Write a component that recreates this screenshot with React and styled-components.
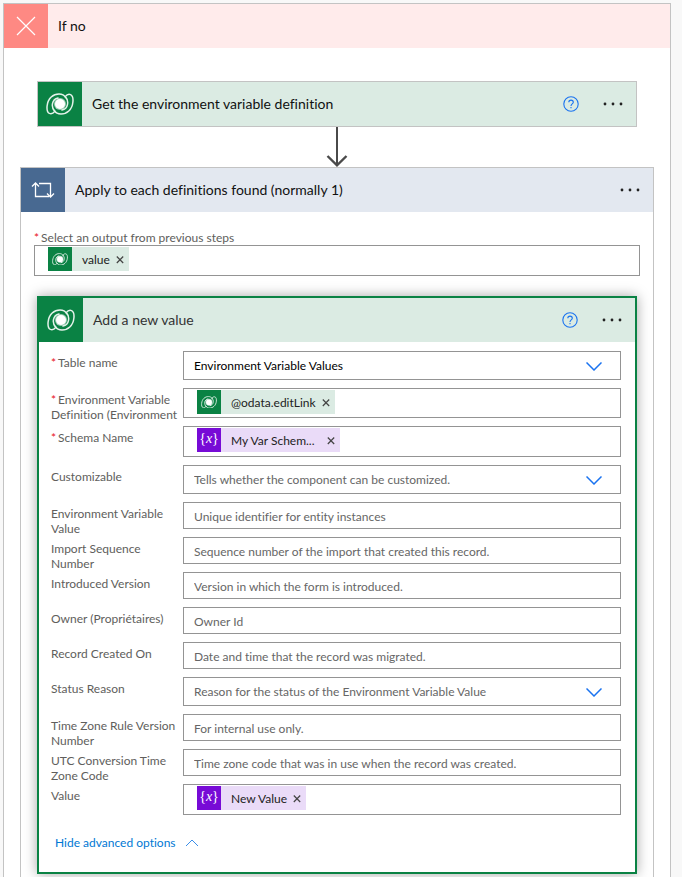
import React from 'react';
import styled, { createGlobalStyle } from 'styled-components';

const GlobalStyle = createGlobalStyle`
  * {
    box-sizing: border-box;
  }

  body {
    margin: 0;
    background: #f8f8f8;
    font-family: Lato, "Open Sans", sans-serif;
    font-size: 12px;
    font-variant-ligatures: none;
    color: #000;
  }

  button, input, select {
    font: inherit;
    color: inherit;
  }
`;

const Page = styled.main`
  padding: 3px 11px 0 3px;
`;

const Branch = styled.section`
  border: 1px solid #c3c3c3;
  border-bottom: 0;
  background: #fff;
`;

const BranchBody = styled.div`
  padding: 33px 16px 0;
`;

const Header = styled.header`
  display: flex;
  align-items: center;
  height: 44px;
  padding-right: 13px;
  background: ${(props) => props.$tint};
`;

const HeaderIcon = styled.div`
  display: flex;
  align-items: center;
  justify-content: center;
  width: 44px;
  height: 44px;
  background: ${(props) => props.$color};
`;

const Title = styled.h2`
  flex: 1;
  margin: 0 0 0 10px;
  padding-bottom: 1px;
  font-size: 14px;
  font-weight: 400;
  color: ${(props) => props.$color || '#111'};
`;

const IconButton = styled.button`
  display: flex;
  align-items: center;
  padding: 0;
  border: 0;
  background: none;
  cursor: pointer;
`;

const HeaderActions = styled.div`
  display: flex;
  align-items: center;
  gap: 24px;
`;

const ActionCard = styled.article`
  margin: 0 17px;
  border: 1px solid #c3c3c3;
`;

const Connector = styled.div`
  display: flex;
  justify-content: center;
  height: 40px;
`;

const Scope = styled.section`
  padding-bottom: 3px;
  border: 1px solid #c3c3c3;
  border-bottom: 0;
`;

const ScopeInput = styled.div`
  padding: 18px 13px 20px;
`;

const SelectedCard = styled.article`
  margin: 0 16px;
  border: 2px solid #0a8244;
  background: #fff;
  box-shadow: 0 0 12px rgba(0, 0, 0, 0.35);
`;

const Form = styled.form`
  padding: 9px 14px 20px 12px;
`;

const Row = styled.div`
  display: grid;
  grid-template-columns: 132px 1fr;
  align-items: start;
`;

const Label = styled.label`
  display: block;
  line-height: 15px;
  color: #605e5c;
`;

const RowLabel = styled(Label)`
  padding-top: 4px;
`;

const Required = styled.span`
  margin-right: 2px;
  color: #e81123;
`;

const Field = styled.div`
  position: relative;
  margin-bottom: 8px;
`;

const TextInput = styled.input`
  display: block;
  width: 100%;
  height: 27px;
  padding: 2px 10px 0;
  border: 1px solid #949494;
  border-radius: 0;
  background: #fff;

  &::placeholder {
    color: #666;
    opacity: 1;
  }
`;

const Select = styled.select`
  display: block;
  width: 100%;
  height: 29px;
  padding: 0 44px 0 10px;
  border: 1px solid #949494;
  border-radius: 0;
  background: #fff;
  color: ${(props) => (props.$filled ? '#000' : '#666')};
  appearance: none;
`;

const SelectArrow = styled.svg`
  position: absolute;
  top: 11px;
  right: 19px;
  pointer-events: none;
`;

const TokenBox = styled.div`
  display: flex;
  height: ${(props) => (props.$compact ? '30px' : '31px')};
  padding: 1px 13px;
  border: 1px solid #949494;
  background: #fff;
`;

const TokenInput = styled.input`
  flex: 1;
  min-width: 0;
  border: 0;
  outline: 0;
  background: none;
`;

const Token = styled.span`
  display: flex;
  align-items: center;
  height: 24px;
  padding-right: 5px;
  background: ${(props) => (props.$variable ? '#eadbf8' : '#dbebe3')};
`;

const TokenIcon = styled.span`
  display: flex;
  align-items: center;
  justify-content: center;
  width: 24px;
  height: 24px;
  margin-right: 10px;
  background: ${(props) => (props.$variable ? '#770bd6' : '#0a8244')};
`;

const Expression = styled.span`
  padding-bottom: 3px;
  font-family: "Liberation Serif", serif;
  font-size: 14px;
  color: #fff;
`;

const TokenText = styled.span`
  margin-right: ${(props) => (props.$clipped ? '12px' : '6px')};
  padding-top: 1px;
  color: #222;
`;

const AdvancedToggle = styled.button`
  display: flex;
  align-items: center;
  gap: 9px;
  margin: 11px 0 0 4px;
  padding: 0;
  border: 0;
  background: none;
  line-height: 18px;
  color: #0078d4;
  cursor: pointer;
`;

const ribbon = 'M8.8 18.4C7.2 20.4 5.2 21.1 3.4 20.4C1.2 19.3 .8 16 1.1 13C1.5 9 3 6 5.2 4C7.4 2 10 1 13 1C16 1 18.4 2.2 19.6 4.4M8.8 18.4C4.8 14.4 5.6 6.2 12 5';

function DataverseIcon({ width = 28 }) {
  return (
    <svg width={width} height={width * 22 / 28} viewBox="0 0 28 22" fill="none" stroke="#e4f2ea" strokeWidth="1.5" strokeLinecap="round">
      <path d={ribbon} />
      <path d={ribbon} transform="rotate(180 14 11)" />
      <circle cx="14" cy="11" r="6" fill="#fff" fillOpacity=".6" stroke="none" />
      <circle cx="14" cy="11" r="5" fill="#fff" stroke="none" />
    </svg>
  );
}

function CloseIcon() {
  return (
    <svg width="20" height="20" viewBox="0 0 20 20" stroke="#fff" strokeWidth="1.2">
      <path d="M1 1L19 19M19 1L1 19" />
    </svg>
  );
}

function LoopIcon() {
  return (
    <svg width="24" height="18" viewBox="0 0 24 18" fill="none" stroke="#fff" strokeWidth="1.3">
      <path d="M4.5 2V15.5H18M1 5.5L4.5 2L8 5.5" />
      <path d="M8 2.5H19.5V15.5M16 12.5L19.5 16L23 12.5" />
    </svg>
  );
}

function Actions({ help }) {
  return (
    <HeaderActions>
      {help && (
        <IconButton type="button" aria-label="Help">
          <svg width="16" height="16" viewBox="0 0 16 16" fill="none" stroke="#1a73f0" strokeWidth="1.1">
            <circle cx="8" cy="8" r="7.2" />
            <path d="M5.8 6.3C5.8 3.4 10.3 3.5 10.3 6.2C10.3 7.9 8 8 8 9.9" />
            <path d="M8 11.1V12.3" />
          </svg>
        </IconButton>
      )}
      <IconButton type="button" aria-label="More commands">
        <svg width="20" height="4" viewBox="0 0 20 4" fill="#222">
          <circle cx="2" cy="2" r="1.4" />
          <circle cx="10" cy="2" r="1.4" />
          <circle cx="18" cy="2" r="1.4" />
        </svg>
      </IconButton>
    </HeaderActions>
  );
}

function TokenField({ id, text, variable, compact }) {
  return (
    <TokenBox $compact={compact}>
      <Token $variable={variable}>
        <TokenIcon $variable={variable}>
          {variable ? <Expression>{'{'}<i>x</i>{'}'}</Expression> : <DataverseIcon width={16} />}
        </TokenIcon>
        <TokenText $clipped={text.endsWith('...')}>{text}</TokenText>
        <IconButton type="button" aria-label={'Remove ' + text}>
          <svg width="8" height="10" viewBox="0 0 8 10" stroke="#444" strokeWidth="1.2">
            <path d="M.8 2.5L7.2 9M7.2 2.5L.8 9" />
          </svg>
        </IconButton>
      </Token>
      <TokenInput id={id} type="text" />
    </TokenBox>
  );
}

function SelectField({ id, text, filled }) {
  return (
    <>
      <Select id={id} $filled={filled}>
        <option>{text}</option>
      </Select>
      <SelectArrow width="16" height="9" viewBox="0 0 16 9" fill="none" stroke="#1a73f0" strokeWidth="1.5">
        <path d="M.5 .5L8 8L15.5 .5" />
      </SelectArrow>
    </>
  );
}

const fields = [
  { id: 'table', label: 'Table name', type: 'select', text: 'Environment Variable Values', required: true, filled: true },
  { id: 'definition', label: 'Environment Variable Definition (Environment', type: 'token', text: '@odata.editLink', required: true, compact: true },
  { id: 'schema', label: 'Schema Name', type: 'token', text: 'My Var Schem...', required: true, variable: true },
  { id: 'customizable', label: 'Customizable', type: 'select', text: 'Tells whether the component can be customized.' },
  { id: 'entity', label: 'Environment Variable Value', text: 'Unique identifier for entity instances' },
  { id: 'sequence', label: 'Import Sequence Number', text: 'Sequence number of the import that created this record.' },
  { id: 'introduced', label: 'Introduced Version', text: 'Version in which the form is introduced.' },
  { id: 'owner', label: 'Owner (Propriétaires)', text: 'Owner Id' },
  { id: 'created', label: 'Record Created On', text: 'Date and time that the record was migrated.' },
  { id: 'status', label: 'Status Reason', type: 'select', text: 'Reason for the status of the Environment Variable Value' },
  { id: 'timezone', label: 'Time Zone Rule Version Number', text: 'For internal use only.' },
  { id: 'utc', label: 'UTC Conversion Time Zone Code', text: 'Time zone code that was in use when the record was created.' },
  { id: 'value', label: 'Value', type: 'token', text: 'New Value', variable: true },
];

function FormRow({ field }) {
  return (
    <Row>
      <RowLabel htmlFor={field.id}>
        {field.required && <Required>*</Required>}
        {field.label}
      </RowLabel>
      <Field>
        {field.type === 'select' && <SelectField id={field.id} text={field.text} filled={field.filled} />}
        {field.type === 'token' && (
          <TokenField id={field.id} text={field.text} variable={field.variable} compact={field.compact} />
        )}
        {!field.type && <TextInput id={field.id} type="text" placeholder={field.text} />}
      </Field>
    </Row>
  );
}

function App() {
  return (
    <Page>
      <GlobalStyle />
      <Branch>
        <Header $tint="#ffebeb">
          <HeaderIcon $color="#fe8983"><CloseIcon /></HeaderIcon>
          <Title>If no</Title>
        </Header>
        <BranchBody>
          <ActionCard>
            <Header $tint="#dbebe3">
              <HeaderIcon $color="#0a8244"><DataverseIcon /></HeaderIcon>
              <Title>Get the environment variable definition</Title>
              <Actions help />
            </Header>
          </ActionCard>
          <Connector>
            <svg width="22" height="40" viewBox="0 0 22 40" fill="none" stroke="#4a4a4a" strokeWidth="2">
              <path d="M11 0V38" />
              <path d="M1.5 29L11 38.3L20.5 29" strokeWidth="2.4" />
            </svg>
          </Connector>
          <Scope>
            <Header $tint="#e3e8f0">
              <HeaderIcon $color="#486991"><LoopIcon /></HeaderIcon>
              <Title>Apply to each definitions found (normally 1)</Title>
              <Actions />
            </Header>
            <ScopeInput>
              <Label htmlFor="output">
                <Required>*</Required>
                Select an output from previous steps
              </Label>
              <TokenField id="output" text="value" />
            </ScopeInput>
            <SelectedCard>
              <Header $tint="#dbebe3">
                <HeaderIcon $color="#0a8244"><DataverseIcon /></HeaderIcon>
                <Title $color="#333">Add a new value</Title>
                <Actions help />
              </Header>
              <Form>
                {fields.map((field) => <FormRow key={field.id} field={field} />)}
                <AdvancedToggle type="button">
                  Hide advanced options
                  <svg width="14" height="8" viewBox="0 0 14 8" fill="none" stroke="#3b8ee8">
                    <path d="M1 7L7 1L13 7" />
                  </svg>
                </AdvancedToggle>
              </Form>
            </SelectedCard>
          </Scope>
        </BranchBody>
      </Branch>
    </Page>
  );
}

export default App;
